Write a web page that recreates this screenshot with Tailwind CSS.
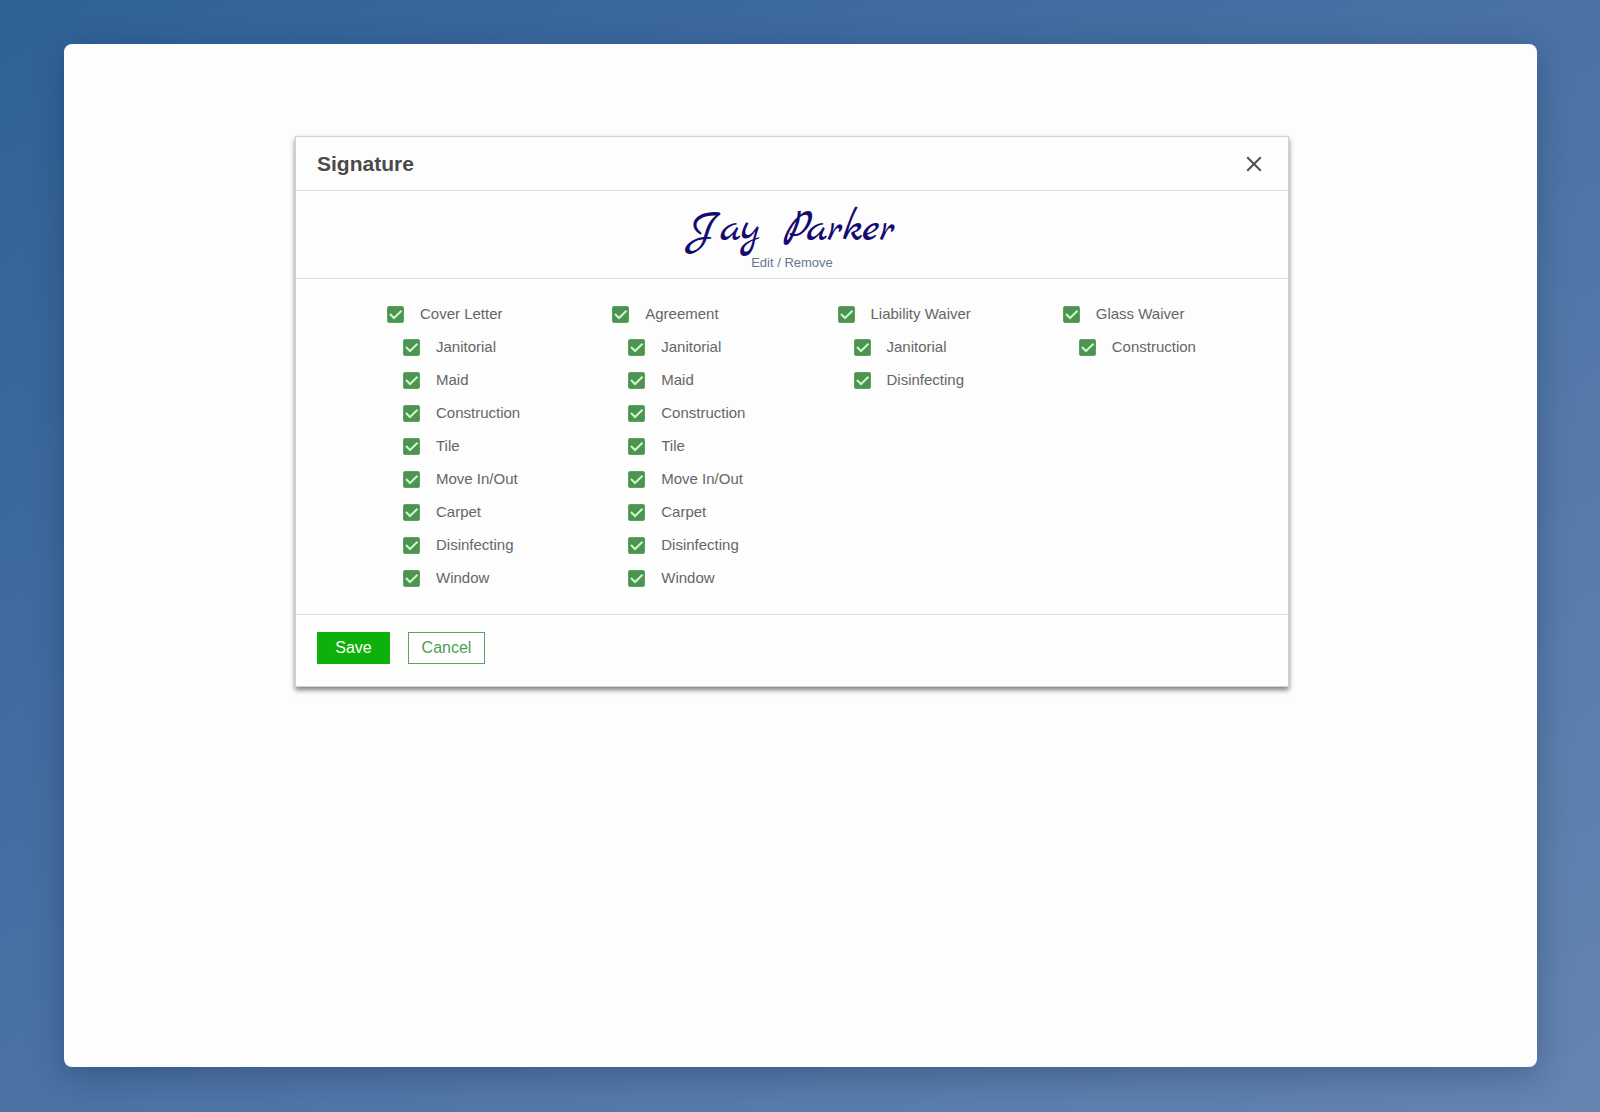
<!DOCTYPE html>
<html lang="en">
  <head>
    <meta charset="UTF-8" />
    <meta name="viewport" content="width=device-width, initial-scale=1.0" />
    <title>Signature</title>
    <script src="https://cdn.jsdelivr.net/npm/@tailwindcss/browser@4"></script>
  </head>
  <body class="min-h-screen flex pl-16 pr-[63px] pt-11 pb-[45px] bg-linear-to-br from-[#2f6196] via-[#4a72a5] to-[#6585b1] font-['Liberation_Sans',Arial,sans-serif] text-[#666]">
    <main class="flex-1 rounded-lg bg-[#fdfdfd] pt-[92px] pl-[231px] pr-[248px] shadow-[0_8px_32px_rgba(15,35,65,0.32)]">
      <section
        role="dialog"
        aria-labelledby="dialogTitle"
        class="border border-[#d2d2d2] bg-[#fdfdfd] shadow-[0_3px_5px_rgba(0,0,0,0.5)]"
      >
        <header class="flex items-center justify-between h-[54px] pl-[21px] pr-[26px] border-b border-[#dedede]">
          <h1 id="dialogTitle" class="text-[21px] font-bold text-[#4a4a4a]">Signature</h1>
          <button type="button" aria-label="Close" class="text-[#505050]">
            <svg class="size-4" viewBox="0 0 16 16" fill="none" stroke="currentColor" stroke-width="2">
              <path d="M1.2 1.2 14.8 14.8M14.8 1.2 1.2 14.8" />
            </svg>
          </button>
        </header>

        <div class="flex flex-col items-center pt-3 h-[88px] border-b border-[#dedede]">
          <p class="flex gap-6 h-[52px] text-[44px] leading-[54px] text-[#150a70] font-['Marck_Script','Liberation_Serif',cursive]">
            <span>Jay</span>
            <span>Parker</span>
          </p>
          <p class="text-[13px] leading-4 text-[#667690]">
            <a href="#edit">Edit</a> / <a href="#remove">Remove</a>
          </p>
        </div>

        <div id="documents" class="grid grid-cols-4 pl-[91px] pt-[19px] pb-[19px] border-b border-[#dedede] text-[15px]"></div>

        <footer class="flex gap-[18px] px-[21px] pt-[17px] pb-[22px] text-base">
          <button type="button" class="w-[73px] h-8 bg-[#0eb00a] text-white">Save</button>
          <button type="button" class="w-[77px] h-8 border border-[#5f9f62] bg-white text-[#4ca052]">Cancel</button>
        </footer>
      </section>
    </main>

    <script>
      const services = [
        "Janitorial",
        "Maid",
        "Construction",
        "Tile",
        "Move In/Out",
        "Carpet",
        "Disinfecting",
        "Window",
      ];

      const documents = [
        { name: "Cover Letter", items: services },
        { name: "Agreement", items: services },
        { name: "Liability Waiver", items: ["Janitorial", "Disinfecting"] },
        { name: "Glass Waiver", items: ["Construction"] },
      ];

      function checkbox(label) {
        return `
          <label class="flex items-center gap-4 h-[33px]">
            <span class="grid place-items-center">
              <input type="checkbox" checked class="peer col-start-1 row-start-1 appearance-none size-[17px] rounded-xs border border-[#57a65a] checked:bg-[#4f9253]" />
              <svg class="col-start-1 row-start-1 size-[17px] pointer-events-none invisible peer-checked:visible" viewBox="0 0 17 17" fill="none" stroke="#c5ffc4" stroke-width="2">
                <path d="M3 8 7 12 14.5 4.8" />
              </svg>
            </span>
            ${label}
          </label>
        `;
      }

      document.getElementById("documents").innerHTML = documents
        .map(
          (doc) => `
            <div>
              ${checkbox(doc.name)}
              <div class="pl-4">${doc.items.map(checkbox).join("")}</div>
            </div>
          `
        )
        .join("");
    </script>
  </body>
</html>
